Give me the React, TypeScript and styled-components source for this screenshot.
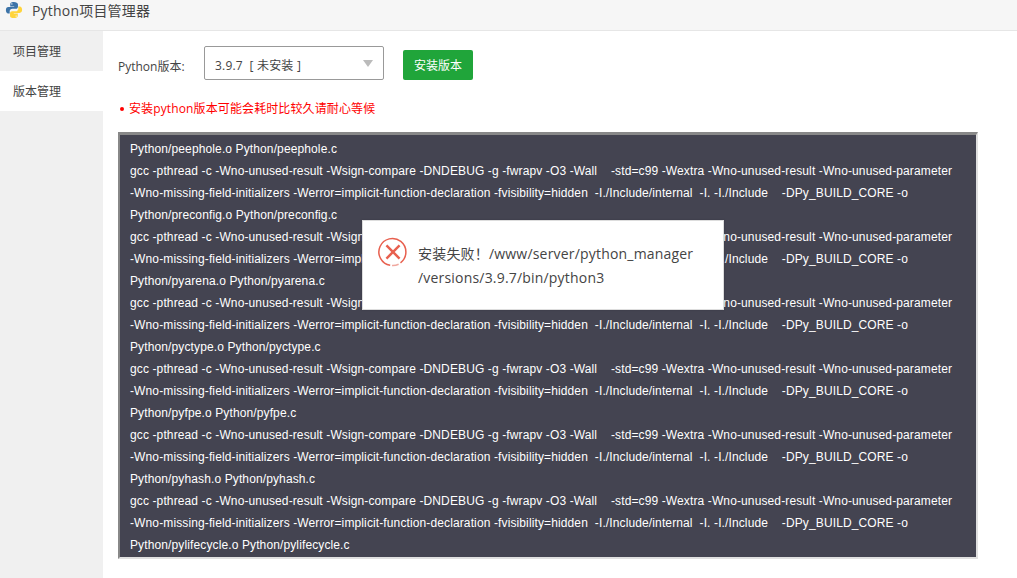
import React from 'react';
import styled, {createGlobalStyle} from 'styled-components';

const GlobalStyle = createGlobalStyle`
	html,body{
		margin:0;
		padding:0;
		height:100%;
		background:white;
		overflow:hidden;
	}
	body{
		font-family:"Open Sans","Noto Sans CJK SC",sans-serif;
		font-size:12px;
		color:#333;
	}
`;

const Page = styled.div`
	position:relative;
	width:1017px;
	height:578px;
	display:flex;
	flex-direction:column;
	overflow:hidden;
`;

const TitleBar = styled.header`
	height:31px;
	flex:none;
	display:flex;
	align-items:center;
	gap:9px;
	padding:0 0 11px 5px;
	box-sizing:border-box;
	background:#f6f6f6;
	border-bottom:1px solid #e6e6e6;
	font-size:14px;
	letter-spacing:.2px;
	color:#444;
`;

const Body = styled.div`
	flex:1;
	display:flex;
	min-height:0;
`;

const Sidebar = styled.nav`
	width:103px;
	flex:none;
	background:#f0f0f0;
`;

const NavItem = styled.div<{$active?:boolean}>`
	height:40px;
	line-height:42px;
	padding-left:13px;
	font-size:12px;
	color:#444;
	background:${p=>p.$active ? 'white' : 'transparent'};
`;

const Content = styled.main`
	flex:1;
	padding:15px 0 0 15px;
	min-width:0;
`;

const VersionRow = styled.div`
	display:flex;
	align-items:center;
	height:34px;
`;

const FieldLabel = styled.label`
	width:86px;
	padding-top:6px;
	font-size:12px;
	color:#444;
`;

const Select = styled.div`
	position:relative;
	width:180px;
	height:34px;
	box-sizing:border-box;
	border:1px solid #999;
	border-radius:2px;
	padding-left:10px;
	line-height:38px;
	font-size:12px;
	letter-spacing:.2px;
	color:#444;
	background:white;
`;

const Caret = styled.i`
	position:absolute;
	right:10px;
	top:13px;
	border-style:solid;
	border-width:7px 5px 0;
	border-color:#bbb transparent transparent;
`;

const InstallButton = styled.button`
	width:70px;
	height:30px;
	margin:4px 0 0 19px;
	padding:0;
	border:none;
	border-radius:2px;
	font:inherit;
	font-size:12px;
	color:white;
	background:#20a53a;
`;

const Notice = styled.ul`
	list-style:none;
	margin:20px 0 15px;
	padding:0 0 0 11px;
	position:relative;
	height:17px;
	line-height:17px;
	font-size:12px;
	letter-spacing:.12px;
	color:#f00;
	&::before{
		content:'';
		position:absolute;
		left:2px;
		top:7px;
		width:4px;
		height:4px;
		border-radius:50%;
		background:#f00;
	}
`;

const LogBox = styled.div`
	width:860px;
	height:427px;
	box-sizing:border-box;
	padding:3px 0 0 10px;
	border:2px solid #e0e0e0;
	border-top:3px solid #888;
	border-left-color:#888;
	background:#444451;
	overflow:hidden;
`;

const LogLine = styled.div`
	height:22px;
	line-height:22px;
	white-space:pre;
	font-family:"Liberation Sans",Arial,sans-serif;
	font-size:12px;
	letter-spacing:.12px;
	color:white;
`;

const Toast = styled.div`
	position:absolute;
	left:362px;
	top:220px;
	width:362px;
	height:90px;
	box-sizing:border-box;
	display:flex;
	align-items:flex-start;
	padding:16px 0 0 15px;
	gap:10px;
	background:white;
	border:1px solid #ddd;
	box-shadow:0 0 2px rgba(0,0,0,.15);
`;

const ToastText = styled.div`
	padding-top:5px;
	font-size:14px;
	line-height:24px;
	letter-spacing:.19px;
	color:#444;
`;

const PythonLogo = () => (
	<svg width="18" height="18" viewBox="0 0 20 20">
		<path fill="#3d74a8" d="M9.8 1C6.4 1 5.8 2.4 5.8 3.8V6h4.4v.8H3.8C2 6.8 1 8.2 1 10.2c0 2.2 1 3.6 2.6 3.6h1.6v-2.3c0-1.6 1.3-2.9 3-2.9h3.9c1.3 0 2.3-1 2.3-2.3V3.6C13.9 2 12.6 1 9.8 1zM7.6 2.4a.8.8 0 1 1 0 1.6.8.8 0 0 1 0-1.6z"/>
		<path fill="#ffd43b" d="M10.2 19c3.4 0 4-1.4 4-2.8V14H9.8v-.8h6.4c1.8 0 2.8-1.4 2.8-3.4 0-2.2-1-3.6-2.6-3.6h-1.6v2.3c0 1.6-1.3 2.9-3 2.9H7.9c-1.3 0-2.3 1-2.3 2.3v3c0 1.6 1.3 2.3 4.6 2.3zM12.4 17.6a.8.8 0 1 1 0-1.6.8.8 0 0 1 0 1.6z"/>
	</svg>
);

const ErrorIcon = () => (
	<svg width="30" height="30" viewBox="0 0 32 32" style={{flex:'none'}}>
		<path fill="none" stroke="#e8604f" strokeWidth="1.6" d="M24 27.5A14.4 14.4 0 1 0 13 30.2"/>
		<path fill="none" stroke="#f0a89f" strokeWidth="1.6" d="M15 30.4A14.4 14.4 0 0 0 22 29.1"/>
		<path fill="none" stroke="#e8604f" strokeWidth="2.6" d="M9 9l14 14M23 9L9 23"/>
	</svg>
);

const gccA = 'gcc -pthread -c -Wno-unused-result -Wsign-compare -DNDEBUG -g -fwrapv -O3 -Wall    -std=c99 -Wextra -Wno-unused-result -Wno-unused-parameter';
const gccB = '-Wno-missing-field-initializers -Werror=implicit-function-declaration -fvisibility=hidden  -I./Include/internal  -I. -I./Include    -DPy_BUILD_CORE -o';
const objects = ['preconfig','pyarena','pyctype','pyfpe','pyhash','pylifecycle'];
const logLines = [
	'Python/peephole.o Python/peephole.c',
	...objects.flatMap(name=>[gccA,gccB,`Python/${name}.o Python/${name}.c`]),
];

function App() {
	return (
		<Page>
			<GlobalStyle/>
			<TitleBar>
				<PythonLogo/>
				<span>Python项目管理器</span>
			</TitleBar>
			<Body>
				<Sidebar>
					<NavItem>项目管理</NavItem>
					<NavItem $active>版本管理</NavItem>
				</Sidebar>
				<Content>
					<VersionRow>
						<FieldLabel>Python版本:</FieldLabel>
						<Select>
							3.9.7&nbsp; [ 未安装 ]
							<Caret/>
						</Select>
						<InstallButton>安装版本</InstallButton>
					</VersionRow>
					<Notice>安装python版本可能会耗时比较久请耐心等候</Notice>
					<LogBox>
						{logLines.map((line,i)=><LogLine key={i}>{line}</LogLine>)}
					</LogBox>
				</Content>
			</Body>
			<Toast>
				<ErrorIcon/>
				<ToastText>
					安装失败！/www/server/python_manager<br/>
					/versions/3.9.7/bin/python3
				</ToastText>
			</Toast>
		</Page>
	);
}

export default App;
